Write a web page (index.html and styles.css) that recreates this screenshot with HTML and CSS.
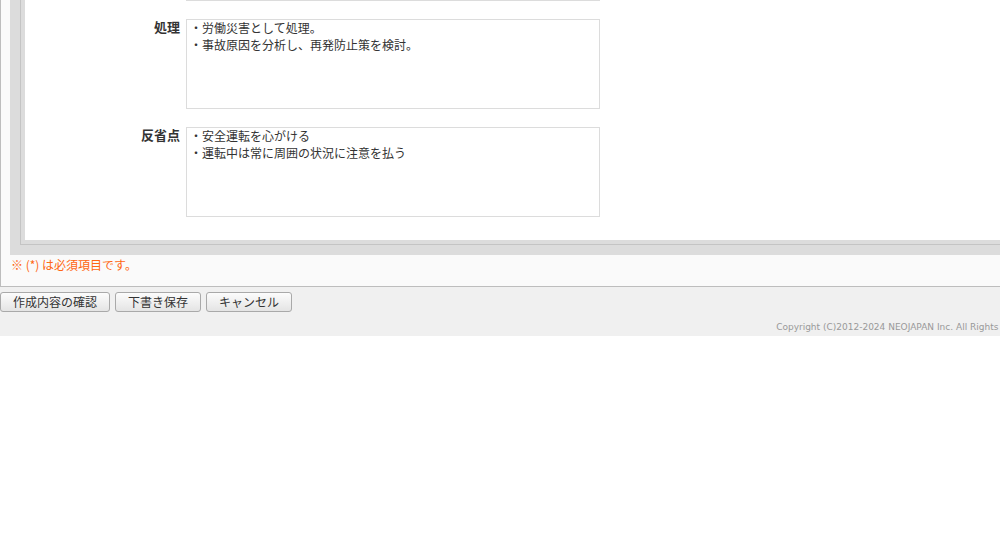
FILE: index.html
```html
<!DOCTYPE html>
<html>
<head>
    <meta charset="utf-8">
	<title>事故報告書 作成</title>
	<link rel="stylesheet" href="styles.css">
</head>
<body>
  <div class='page'>
    <div class='sheet'>
      <div class='form_outer'>
        <div class='form_band'>
          <div class='form_inner'>
            <div class='form_body'>
              <div class='field_label'></div>
              <div class='field_tail'></div>

              <div class='field_label'>処理</div>
              <textarea class='field_text' readonly>・労働災害として処理。
・事故原因を分析し、再発防止策を検討。</textarea>

              <div class='field_label'>反省点</div>
              <textarea class='field_text' readonly>・安全運転を心がける
・運転中は常に周囲の状況に注意を払う</textarea>
            </div>
          </div>
        </div>
        <p class='note'>※ (*) は必須項目です。</p>
      </div>
      <div class='footer'>
        <div class='buttons'>
          <button class='btn' type='button'>作成内容の確認</button>
          <button class='btn' type='button'>下書き保存</button>
          <button class='btn' type='button'>キャンセル</button>
        </div>
        <div class='copyright'>Copyright (C)2012-2024 NEOJAPAN Inc. All Rights Reserved.</div>
      </div>
    </div>
  </div>
</body>
</html>
```

FILE: styles.css
```css
      html, body{
        margin: 0;
        padding: 0;
        background: #fff;
      }
      .page{
        width: 1000px;
        overflow: hidden;
        font-family: "Noto Sans CJK JP", "Noto Sans", sans-serif;
        color: #333;
        font-size: 12px;
      }
      .sheet{
        width: 1050px;
      }
      /* 外枠 */
      .form_outer{
        background: #fafafa;
        border-left: 1px solid #bdbdbd;
        border-bottom: 1px solid #bdbdbd;
        padding-left: 9px;
      }
      .form_band{
        background: #dcdcdc;
        padding: 0 0 10px 10px;
      }
      .form_inner{
        border-left: 1px solid #c4c4c4;
        border-bottom: 1px solid #c4c4c4;
        padding: 0 0 4px 4px;
      }
      .form_body{
        background: #fff;
        display: grid;
        grid-template-columns: 155px 414px;
        column-gap: 6px;
        row-gap: 18px;
        padding-bottom: 23px;
      }
      .field_tail{
        height: 0;
        border-bottom: 1px solid #dcdcdc;
      }
      .field_label{
        text-align: right;
        font-weight: bold;
        font-size: 13px;
        line-height: 16px;
      }
      .field_text{
        display: block;
        box-sizing: border-box;
        width: 414px;
        height: 90px;
        margin: 0;
        border: 1px solid #dcdcdc;
        padding: 0 3px;
        font-family: "Noto Sans CJK JP", "Noto Sans", sans-serif;
        font-size: 12px;
        line-height: 16.5px;
        color: #333;
        background: #fff;
        resize: none;
        overflow: hidden;
        outline: none;
      }
      .note{
        margin: 0;
        height: 31px;
        padding-left: 1px;
        line-height: 19px;
        color: #ff6612;
      }
      /* フッター */
      .footer{
        background: #f0f0f0;
        padding-top: 5px;
        height: 44px;
      }
      .buttons{
        display: flex;
        gap: 5px;
      }
      .btn{
        box-sizing: border-box;
        height: 20px;
        padding: 0 12px;
        margin: 0;
        border: 1px solid #a9a9a9;
        border-radius: 3px;
        background: linear-gradient(#fcfcfc, #e4e4e4);
        font-family: "Noto Sans CJK JP", "Noto Sans", sans-serif;
        font-size: 12px;
        line-height: 18px;
        color: #333;
      }
      .copyright{
        text-align: right;
        padding: 9px 4px 0 0;
        font-family: "DejaVu Sans", sans-serif;
        font-size: 9px;
        line-height: 12px;
        color: #999;
      }
```
